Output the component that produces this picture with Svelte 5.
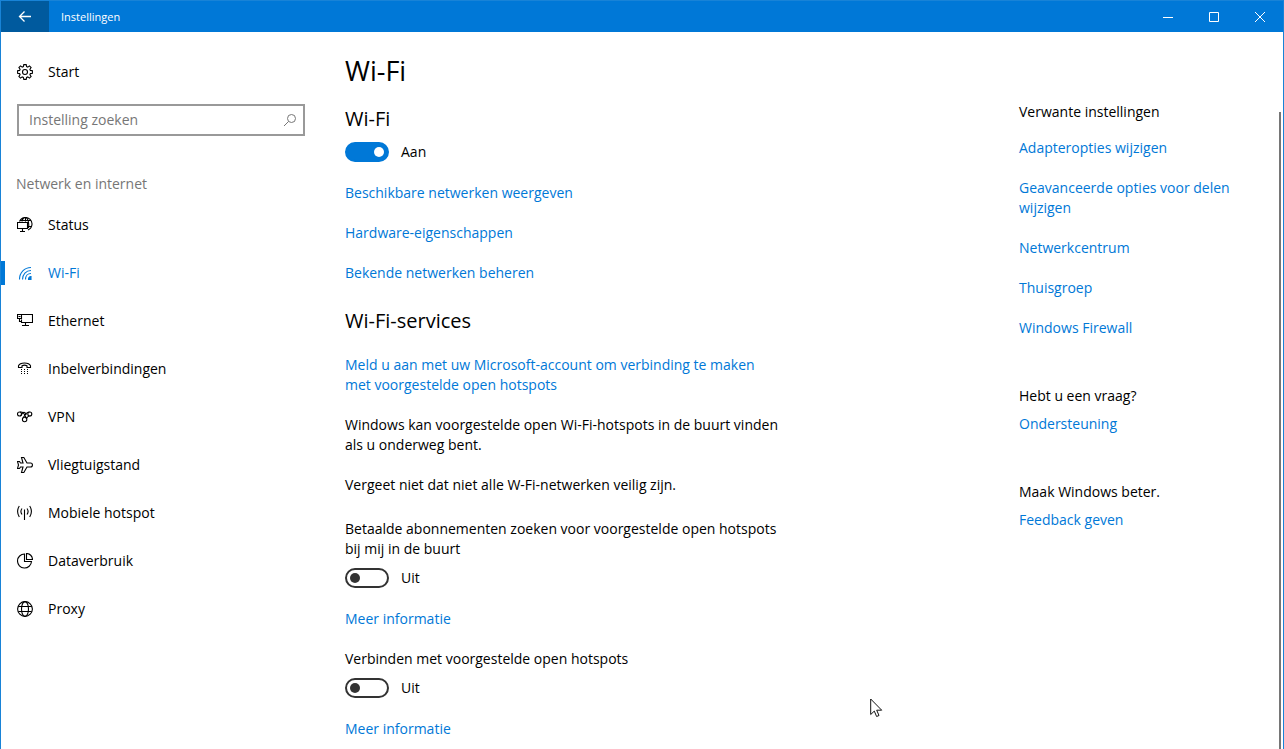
<script lang="ts">
	let wifi = $state(true);
	let paidPlans = $state(false);
	let autoConnect = $state(false);
	let query = $state('');

	const navItems = [
		{ id: 'status', label: 'Status' },
		{ id: 'wifi', label: 'Wi-Fi' },
		{ id: 'ethernet', label: 'Ethernet' },
		{ id: 'dialup', label: 'Inbelverbindingen' },
		{ id: 'vpn', label: 'VPN' },
		{ id: 'airplane', label: 'Vliegtuigstand' },
		{ id: 'hotspot', label: 'Mobiele hotspot' },
		{ id: 'data', label: 'Dataverbruik' },
		{ id: 'proxy', label: 'Proxy' }
	];
	let active = $state('wifi');

	const networkLinks = [
		'Beschikbare netwerken weergeven',
		'Hardware-eigenschappen',
		'Bekende netwerken beheren'
	];

	const relatedLinks = [
		'Adapteropties wijzigen',
		'Geavanceerde opties voor delen wijzigen',
		'Netwerkcentrum',
		'Thuisgroep',
		'Windows Firewall'
	];
</script>

{#snippet icon(id)}
	<svg class="icon" viewBox="0 0 16 16" aria-hidden="true">
		{#if id === 'gear'}
			<path d="M6.8.6h2.4l.4 2 1.2.5 1.7-1.2 1.6 1.6-1.2 1.7.5 1.2 2 .4v2.4l-2 .4-.5 1.2 1.2 1.7-1.6 1.6-1.7-1.2-1.2.5-.4 2H6.8l-.4-2-1.2-.5-1.7 1.2-1.6-1.6 1.2-1.7-.5-1.2-2-.4V6.8l2-.4.5-1.2-1.2-1.7 1.6-1.6 1.7 1.2 1.2-.5z" />
			<circle cx="8" cy="8" r="2.5" />
		{:else if id === 'status'}
			<path d="M2.5 4.500A6.500 6.500 0 1 1 11 13M3 3.500h11M10.500 9.500h4M5 4.500C5.500 2 7 .5 8.500.5s4 3.500 3 10.500M8.500.5v4" />
			<path d="M.5 5.500h10v6H.5zM5.500 11.500v3M3 14.500h5" />
		{:else if id === 'wifi'}
			<path d="M2.500 14.500C2.500 7.500 7.500 2.500 14 2.500M5.500 14.500c0-5.200 3.500-9 8.500-9M8.500 14.500c0-3.400 2.200-6 5.500-6" />
			<path d="M11.500 14.500c0-1.700 1-3 2.500-3v3z" fill="currentColor" />
		{:else if id === 'ethernet'}
			<path d="M5 1.500h10.500v8h-11v-3M.5 1.500h4v4h-4zM1.500 3.500h2M2.500 5.500v3h2M8.500 9.500v3M5 12.500h7" />
		{:else if id === 'dialup'}
			<path d="M1.500 6.500V4.800C3 1 12 1 13.500 4.800v1.700H10V4.800C8.500 4 6.500 4 5 4.800v1.700z" />
			<path d="M4 8.500h1M7 8.500h1M10 8.500h1M4 10.500h1M7 10.500h1M10 10.500h1M4 12.500h1M7 12.500h1M10 12.500h1" />
		{:else if id === 'vpn'}
			<ellipse cx="2.500" cy="5" rx="2" ry="2" />
			<ellipse cx="12.800" cy="5" rx="2" ry="2" />
			<circle cx="7.600" cy="10.500" r="2.200" />
			<path d="M3 3c3.500-.5 4 1.500 6.500 6.500M3.500 6.800C5 6.500 5 3 7 3.200s1.500 2.300 2.500 2.300M12.500 3C9 3 8.500 5.500 6 9M12.500 7c-1.500 0-2.200 1-3 2.500" />
		{:else if id === 'airplane'}
			<path d="M4.500.5h2.300L10 6h3.500c2.600 0 2.600 4 0 4H10l-3.200 5.500H4.500L6 10H3.500l-1 1.500h-2L1.500 8l-1-3.500h2l1 1.500H6z" />
		{:else if id === 'hotspot'}
			<path d="M7.500 4.500v10.500M5 3.500q-2.200 3 0 6M10 3.500q2.200 3 0 6M2.300 1q-3.400 5.500 0 11M12.700 1q3.400 5.500 0 11" />
		{:else if id === 'data'}
			<path d="M7.500 1a7 7 0 1 0 7 7.500h-7zM9.500.5a6 6 0 0 1 6 6h-6z" />
		{:else if id === 'proxy'}
			<circle cx="8" cy="8" r="7.400" />
			<ellipse cx="8" cy="8" rx="3.500" ry="7.400" />
			<path d="M1.300 5.500h13.400M1.300 10.500h13.400" />
		{/if}
	</svg>
{/snippet}

<div class="window">
	<header class="titlebar">
		<button class="back" aria-label="Terug">
			<svg viewBox="0 0 14 14" aria-hidden="true"><path d="M13 6.500H1.500M6.500 1.500l-5 5 5 5" /></svg>
		</button>
		<span class="app-title">Instellingen</span>
		<button class="caption" aria-label="Minimaliseren">
			<svg viewBox="0 0 12 12" aria-hidden="true"><path d="M1 6.500h10" /></svg>
		</button>
		<button class="caption" aria-label="Maximaliseren">
			<svg viewBox="0 0 12 12" aria-hidden="true"><path d="M1.500 1.500h9v9h-9z" /></svg>
		</button>
		<button class="caption" aria-label="Sluiten">
			<svg viewBox="0 0 12 12" aria-hidden="true"><path d="M1 1l10 10M11 1L1 11" /></svg>
		</button>
	</header>

	<div class="body">
		<nav class="sidebar">
			<a class="nav-item" href="#start">{@render icon('gear')}Start</a>
			<div class="search">
				<input type="text" aria-label="Instelling zoeken" placeholder="Instelling zoeken" bind:value={query} />
				<svg viewBox="0 0 14 14" aria-hidden="true"><circle cx="8.500" cy="5.500" r="4" /><path d="M5.500 8.500L1 13" /></svg>
			</div>
			<h2 class="nav-heading">Netwerk en internet</h2>
			{#each navItems as item (item.id)}
				<a
					class="nav-item"
					class:active={active === item.id}
					href="#{item.id}"
					onclick={() => (active = item.id)}
				>
					{@render icon(item.id)}{item.label}
				</a>
			{/each}
		</nav>

		<main>
			<h1>Wi-Fi</h1>
			<h2 id="wifi-label">Wi-Fi</h2>
			<label class="toggle">
				<input type="checkbox" role="switch" aria-labelledby="wifi-label" bind:checked={wifi} />
				{wifi ? 'Aan' : 'Uit'}
			</label>
			{#each networkLinks as link}
				<p><a href="#wifi">{link}</a></p>
			{/each}

			<h2 class="services">Wi-Fi-services</h2>
			<p>
				<a href="#account">Meld u aan met uw Microsoft-account om verbinding te maken met voorgestelde open hotspots</a>
			</p>
			<p>Windows kan voorgestelde open Wi-Fi-hotspots in de buurt vinden als u onderweg bent.</p>
			<p>Vergeet niet dat niet alle W-Fi-netwerken veilig zijn.</p>

			<label class="toggle-label paid" for="paid">
				Betaalde abonnementen zoeken voor voorgestelde open hotspots bij mij in de buurt
			</label>
			<div class="toggle">
				<input id="paid" type="checkbox" role="switch" bind:checked={paidPlans} />
				{paidPlans ? 'Aan' : 'Uit'}
			</div>
			<p><a href="#info">Meer informatie</a></p>

			<label class="toggle-label" for="connect">Verbinden met voorgestelde open hotspots</label>
			<div class="toggle">
				<input id="connect" type="checkbox" role="switch" bind:checked={autoConnect} />
				{autoConnect ? 'Aan' : 'Uit'}
			</div>
			<p><a href="#info">Meer informatie</a></p>
		</main>

		<aside>
			<section class="related">
				<h3>Verwante instellingen</h3>
				{#each relatedLinks as link}
					<a href="#related">{link}</a>
				{/each}
			</section>
			<section>
				<h3>Hebt u een vraag?</h3>
				<a href="#support">Ondersteuning</a>
			</section>
			<section>
				<h3>Maak Windows beter.</h3>
				<a href="#feedback">Feedback geven</a>
			</section>
		</aside>

		<div class="scroll-thumb"></div>
	</div>

	<svg class="pointer" viewBox="0 0 13 20" aria-hidden="true">
		<path d="M.7 1v15.500l3.600-3.400 2.300 5.400 2.400-1-2.300-5.300h5z" />
	</svg>
</div>

<style>
	:global(body) {
		margin: 0;
	}

	.window {
		--accent: #0078d7;
		position: relative;
		display: flex;
		flex-direction: column;
		box-sizing: border-box;
		height: 100vh;
		overflow: hidden;
		border: 1px solid #1883d7;
		border-bottom: 0;
		background: #fff;
		color: #000;
		font-family: 'Segoe UI', 'Open Sans', sans-serif;
		font-size: 14px;
		line-height: 20px;
	}

	h1,
	h2,
	h3,
	p {
		margin: 0;
		font-weight: 400;
	}

	a {
		color: var(--accent);
		text-decoration: none;
	}

	svg {
		fill: none;
		stroke: currentColor;
	}

	.titlebar {
		display: flex;
		align-items: center;
		flex: none;
		height: 31px;
		background: var(--accent);
		color: #fff;
	}

	.titlebar button {
		display: flex;
		align-items: center;
		justify-content: center;
		height: 100%;
		padding: 0;
		border: 0;
		background: none;
		color: inherit;
	}

	.titlebar .back {
		width: 48px;
		background: #005a9e;
	}

	.back svg {
		width: 14px;
		height: 14px;
		stroke-width: 1.3;
	}

	.titlebar .caption {
		width: 46px;
	}

	.caption svg {
		width: 12px;
		height: 12px;
	}

	.app-title {
		flex: 1;
		padding-left: 12px;
		font-size: 11px;
	}

	.body {
		position: relative;
		display: flex;
		flex: 1;
		min-height: 0;
	}

	.sidebar {
		flex: none;
		width: 320px;
		padding-top: 16px;
	}

	.nav-item {
		display: flex;
		align-items: center;
		gap: 15px;
		box-sizing: border-box;
		height: 48px;
		padding-left: 12px;
		border-left: 4px solid transparent;
		color: inherit;
	}

	.nav-item.active {
		color: var(--accent);
		background: linear-gradient(var(--accent), var(--accent)) border-box left center / 4px 24px no-repeat;
	}

	.icon {
		flex: none;
		width: 16px;
		height: 16px;
		stroke-width: 1.1;
	}

	.search {
		display: flex;
		align-items: center;
		box-sizing: border-box;
		height: 32px;
		margin: 8px 16px 38px;
		padding: 0 6px 0 10px;
		border: 2px solid #999;
	}

	.search input {
		flex: 1;
		min-width: 0;
		padding: 0;
		border: 0;
		outline: 0;
		background: none;
		color: inherit;
		font: inherit;
	}

	.search input::placeholder {
		color: #767676;
		opacity: 1;
	}

	.search svg {
		width: 14px;
		height: 14px;
		color: #767676;
	}

	.nav-heading {
		margin-bottom: 7px;
		padding-left: 15px;
		color: #767676;
		font-size: 14px;
		line-height: 20px;
	}

	main {
		flex: 0 1 436px;
		padding: 21px 24px 0;
	}

	h1 {
		margin-bottom: 16px;
		font-size: 27px;
		line-height: 36px;
	}

	main h2 {
		font-size: 20px;
		line-height: 28px;
	}

	main p {
		margin-top: 20px;
	}

	main .services {
		margin-top: 24px;
	}

	.toggle {
		display: flex;
		align-items: center;
		gap: 12px;
		height: 22px;
		margin-top: 8px;
	}

	.toggle input {
		display: flex;
		align-items: center;
		appearance: none;
		box-sizing: border-box;
		width: 44px;
		height: 20px;
		margin: 0;
		padding: 0 3px;
		border: 2px solid #333;
		border-radius: 10px;
	}

	.toggle input::before {
		content: '';
		width: 10px;
		height: 10px;
		border-radius: 50%;
		background: #333;
	}

	.toggle input:checked {
		justify-content: flex-end;
		border-color: var(--accent);
		background: var(--accent);
	}

	.toggle input:checked::before {
		background: #fff;
	}

	.toggle-label {
		display: block;
		margin-top: 20px;
	}

	.toggle-label.paid {
		margin-top: 24px;
	}

	aside {
		display: flex;
		flex-direction: column;
		gap: 48px;
		flex: none;
		width: 224px;
		margin-left: auto;
		padding: 70px 40px 0 0;
	}

	section {
		display: flex;
		flex-direction: column;
		gap: 8px;
	}

	.related {
		gap: 20px;
	}

	h3 {
		font-size: 14px;
	}

	.related h3 {
		margin-bottom: -4px;
	}

	.scroll-thumb {
		position: absolute;
		top: 80px;
		right: 2px;
		bottom: 0;
		width: 2px;
		background: #767676;
	}

	/* mouse pointer resting over the page */
	.pointer {
		position: absolute;
		top: 697px;
		left: 869px;
		width: 13px;
		height: 20px;
		fill: #fff;
		stroke: #111;
	}
</style>
